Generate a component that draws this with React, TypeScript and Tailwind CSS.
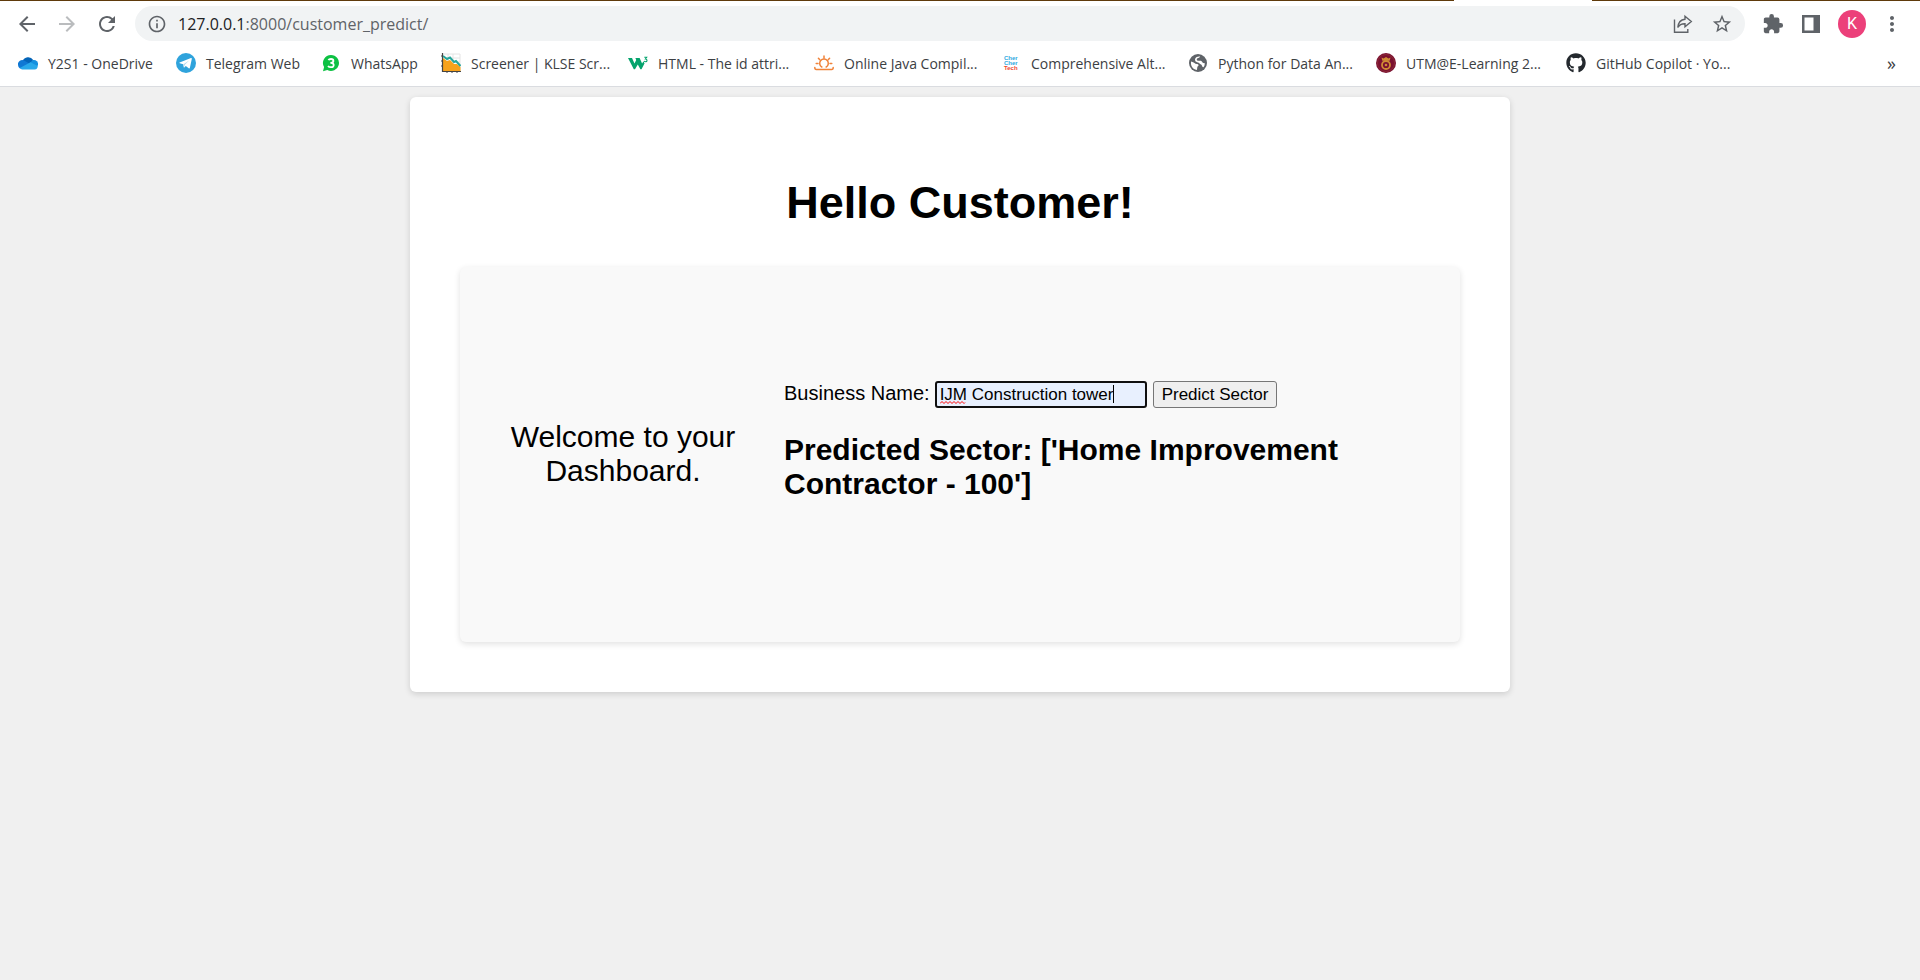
import type { ReactNode } from "react";
import { FaGithub } from "react-icons/fa";
import { MdArrowBack, MdArrowForward, MdRefresh, MdInfoOutline, MdStarBorder, MdExtension, MdMoreVert } from "react-icons/md";

type Bookmark = { label: string; width: string; icon: ReactNode };

const OneDrive = () => (
  <svg viewBox="0 0 20 20" className="size-5">
    <path d="M4.6 8.2A6 6 0 0 1 15.2 7L12 11.5z" fill="#0364b8" />
    <path d="M0 12a4.200 4.200 0 0 1 6.500-4.200L14 12 2 15.600A4.500 4.500 0 0 1 0 12z" fill="#0f78d4" />
    <path d="M11 10.500 15.200 7A4.200 4.200 0 0 1 20 12l-1 2z" fill="#1490df" />
    <path d="M1.800 15 12.500 9.300 19.600 13A3.300 3.300 0 0 1 16.600 16.500H4.200A4.200 4.200 0 0 1 1.800 15z" fill="#28a8ea" />
  </svg>
);

const Telegram = () => (
  <svg viewBox="0 0 20 20" className="size-5">
    <circle cx="10" cy="10" r="10" fill="#2fa3dc" />
    <path d="M3.600 9.600 15 5.100q1-.2.800 1l-1.900 8.700q-.3.900-1.200.4L9.800 13l-1.500 1.500q-.5.400-.6-.5l-.5-2.800-3.500-1q-.8-.3-.1-.6z" fill="#fff" />
    <path d="m7.500 11.200 5.900-3.900-4.600 4.500-.7 2.300z" fill="#b3d9ee" />
  </svg>
);

const WhatsApp = () => (
  <svg viewBox="0 0 20 20" className="size-5">
    <path d="M10 2a8 8 0 1 1-3.700 15.100L2 18.200l1.100-4.100A8 8 0 0 1 10 2z" fill="#0dc143" />
    <path d="M7.400 7.200Q8 6 10 6q2.400 0 2.400 1.900T9.400 9.900q3.300 0 3.300 2.200T10 14.200q-2.200 0-2.900-1.400" fill="none" stroke="#fff" strokeWidth="1.800" />
  </svg>
);

const Chart = () => (
  <svg viewBox="0 0 20 20" className="size-5">
    <path d="M2 1h17v17M2 5h17M2 9h17M7 1v17M12 1v17" fill="none" stroke="#e4e4e4" />
    <path d="M2 5l4 3 3-1 4 4 3 0 3.500 3V18H2z" fill="#f7a21b" />
    <path d="M2 3l4 3 3-1.500 4 4.500 2-1 4.500 5" fill="none" stroke="#26a69a" strokeWidth="2" />
    <path d="M1.500 0v18.500H20" fill="none" stroke="#444" strokeWidth="1.200" />
    <path d="M0 3h2M0 8h2M0 13h2M6 18v2M11 18v2M16 18v2" stroke="#444" />
  </svg>
);

const W3 = () => (
  <svg viewBox="0 0 20 20" className="size-5">
    <path d="M0 5h4l2.500 5.500L8.200 7l-.8-2h4.200l2.500 5.500 1.400-2.300 1 2.300-3 5.800h-1.100L9.800 11.500 7 16.300H5.800z" fill="#04a36c" />
    <path d="M16.300 4.200h2.400L17.400 6q1.600.1 1.600 1.400 0 1.300-1.400 1.300-1 0-1.400-.7" fill="none" stroke="#04a36c" strokeWidth="1.100" />
  </svg>
);

const Sunrise = () => (
  <svg viewBox="0 0 20 20" className="size-5" fill="none" stroke="#f0833a" strokeWidth="1.500" strokeLinecap="round">
    <path d="M.8 14.500q0 2 1.500 2h15.400q1.500 0 1.500-2M7.800 14a4.300 4.300 0 1 1 4.400 0M10 3v2M4.400 5.200l1.200 1.400M15.600 5.200l-1.200 1.400M2.200 10.500H4M16 10.500h1.800" />
  </svg>
);

const CherTech = () => (
  <svg viewBox="0 0 20 20" className="size-5">
    <g fontFamily="Liberation Sans, sans-serif" fontWeight="700" fontSize="6">
      <text x="3" y="7" fill="#2fa9e0">Cher</text>
      <text x="3" y="12" fill="#2fa9e0">Cher</text>
      <text x="3" y="17" fill="#f0472d">Tech</text>
    </g>
  </svg>
);

const Globe = () => (
  <svg viewBox="0 0 20 20" className="size-5">
    <circle cx="10" cy="10" r="9" fill="#5f6368" />
    <path d="M3 8.500Q5.500 9 6.500 10q1 1.200 2.800 1 1.500.3 1.200 1.800-1.300.7-1.300 2l-.2 2.200Q5 16.500 3.500 13 2.700 10.500 3 8.500z" fill="#fff" />
    <path d="M12 3.300q-.2 1.700-1.800 1.700-1.500 0-1.500 1.500 0 1.200 1.500 1.300h2.600q1.400.4 1.700 1.700.8 1 2.400.8-.2 2.700-1.500 4-1-.1-1.300-1.300-.3-1.700-2-2-1.300-1.500-3-1.700Q6.700 8.500 7 6.500q.2-1.700 1.700-2.600z" fill="#fff" />
  </svg>
);

const Crest = () => (
  <svg viewBox="0 0 20 20" className="size-5">
    <circle cx="10" cy="10" r="10" fill="#7a1030" />
    <circle cx="10" cy="10" r="8.500" fill="none" stroke="#8f3038" strokeWidth=".8" />
    <path d="M5.500 4.500 7.500 5.500 10 4l2.500 1.500 2-1-.8 3.200H6.300z" fill="#cf8b35" />
    <circle cx="10" cy="12" r="4" fill="none" stroke="#cf8b35" strokeWidth="1.800" />
    <circle cx="10" cy="12" r="1.300" fill="#cf8b35" />
  </svg>
);

const bookmarks: Bookmark[] = [
  { label: "Y2S1 - OneDrive", width: "w-[158px]", icon: <OneDrive /> },
  { label: "Telegram Web", width: "w-[145px]", icon: <Telegram /> },
  { label: "WhatsApp", width: "w-[120px]", icon: <WhatsApp /> },
  { label: "Screener | KLSE Scr...", width: "w-[187px]", icon: <Chart /> },
  { label: "HTML - The id attri...", width: "w-[186px]", icon: <W3 /> },
  { label: "Online Java Compil...", width: "w-[187px]", icon: <Sunrise /> },
  { label: "Comprehensive Alt...", width: "w-[187px]", icon: <CherTech /> },
  { label: "Python for Data An...", width: "w-[188px]", icon: <Globe /> },
  { label: "UTM@E-Learning 2...", width: "w-[190px]", icon: <Crest /> },
  { label: "GitHub Copilot · Yo...", width: "w-[190px]", icon: <FaGithub className="size-5 text-[#24292e]" /> },
];

function Toolbar() {
  return (
    <div className="flex h-[45px] items-center pr-4 pl-[15px] text-[#5f6368]">
      <button aria-label="Back" className="w-10"><MdArrowBack className="size-6" /></button>
      <button aria-label="Forward" className="w-10 text-[#babcbe]"><MdArrowForward className="size-6" /></button>
      <button aria-label="Reload" className="w-10"><MdRefresh className="size-6" /></button>
      <div className="flex h-[35px] flex-1 items-center rounded-full bg-[#f1f3f4] px-3">
        <MdInfoOutline className="mr-[11px] size-5" />
        <div role="textbox" aria-label="Address" className="flex-1 text-[16px]">
          <span className="text-[#202124]">127.0.0.1</span>:8000/customer_predict/
        </div>
        <button aria-label="Share" className="mr-[18px]">
          <svg viewBox="0 0 20 20" className="size-5" fill="none" stroke="currentColor" strokeWidth="1.400">
            <path d="M1.500 5.500v12.800h13.300V15M12 2.200l6.300 5.300-6.300 5.200V9.800q-5-.1-7.200 3.700.6-7.600 7.200-8.300z" />
          </svg>
        </button>
        <button aria-label="Bookmark this page"><MdStarBorder className="size-[22px]" /></button>
      </div>
      <div className="ml-[17px] flex items-center gap-[14px]">
        <button aria-label="Extensions"><MdExtension className="size-[22px]" /></button>
        <button aria-label="Side panel" className="px-1">
          <svg viewBox="0 0 18 18" className="size-[18px]">
            <path d="M0 0h18v18H0zM2.500 2.500v13h9v-13z" fill="currentColor" fillRule="evenodd" />
          </svg>
        </button>
        <button aria-label="Profile" className="size-7 rounded-full bg-[#ec407a] font-['Roboto',sans-serif] text-[16px] text-white">K</button>
        <button aria-label="Menu"><MdMoreVert className="size-6" /></button>
      </div>
    </div>
  );
}

function BookmarksBar() {
  return (
    <nav className="flex h-10 items-center pr-6 pb-[6px] pl-[18px] text-[14px] text-[#3c4043]">
      {bookmarks.map((b) => (
        <a key={b.label} href="#" className={`flex shrink-0 items-center gap-[10px] whitespace-nowrap ${b.width}`}>
          <span className="shrink-0">{b.icon}</span>
          {b.label}
        </a>
      ))}
      <button aria-label="More bookmarks" className="ml-auto text-[18px] leading-5">»</button>
    </nav>
  );
}

export default function App() {
  return (
    <div className="min-h-screen bg-[#f0f0f0] font-['Liberation_Sans',Arial,sans-serif] text-black">
      <header className="border-b border-[#dadce0] bg-white font-['Open_Sans',sans-serif]">
        <div className="flex h-px">
          <div className="flex-1 bg-[#5f3a0b]" />
          <div className="w-[138px]" />
          <div className="w-[328px] bg-[#5f3a0b]" />
        </div>
        <Toolbar />
        <BookmarksBar />
      </header>
      <main className="mx-auto mt-[10px] max-w-[1100px] rounded-md bg-white p-[50px] shadow-[0_2px_6px_rgba(0,0,0,0.15)]">
        <h1 className="mt-[30px] mb-[38px] text-center text-[45px] leading-[52px] font-bold">Hello Customer!</h1>
        <section className="flex min-h-[375px] items-center gap-12 rounded-md bg-[#f9f9f9] px-[50px] pt-12 pb-[50px] shadow-[0_2px_6px_rgba(0,0,0,0.12)]">
          <p className="w-[226px] shrink-0 text-center text-[30px] leading-[34px]">Welcome to your Dashboard.</p>
          <div className="flex-1">
            <form className="flex items-center" onSubmit={(e) => e.preventDefault()}>
              <label htmlFor="business" className="mr-[5px] pb-1 text-[20px] leading-6">Business Name:</label>
              <span className="relative mr-[6px]">
                <input
                  id="business"
                  type="text"
                  defaultValue="IJM Construction tower"
                  className="block h-[27px] w-[212px] rounded-[3px] border-2 border-[#101010] bg-[#e8f0fe] px-[3px] text-[17px] leading-5 outline-none"
                />
                <svg viewBox="0 0 27 3" className="absolute top-5 left-[5px] h-[3px] w-[27px]" fill="none" stroke="#f00">
                  <path d="M0 2.500 2 .5l2 2 2-2 2 2 2-2 2 2 2-2 2 2 2-2 2 2 2-2 2 2 1-1" />
                </svg>
                <span className="absolute top-1 left-[178px] h-[18px] w-px bg-black" />
              </span>
              <button className="h-[27px] rounded-[3px] border border-[#767676] bg-[#efefef] px-2 text-[17px] leading-5">Predict Sector</button>
            </form>
            <h2 className="mt-6 mb-[26px] text-[30px] leading-[34px] font-bold">Predicted Sector: ['Home Improvement Contractor - 100']</h2>
          </div>
        </section>
      </main>
    </div>
  );
}
